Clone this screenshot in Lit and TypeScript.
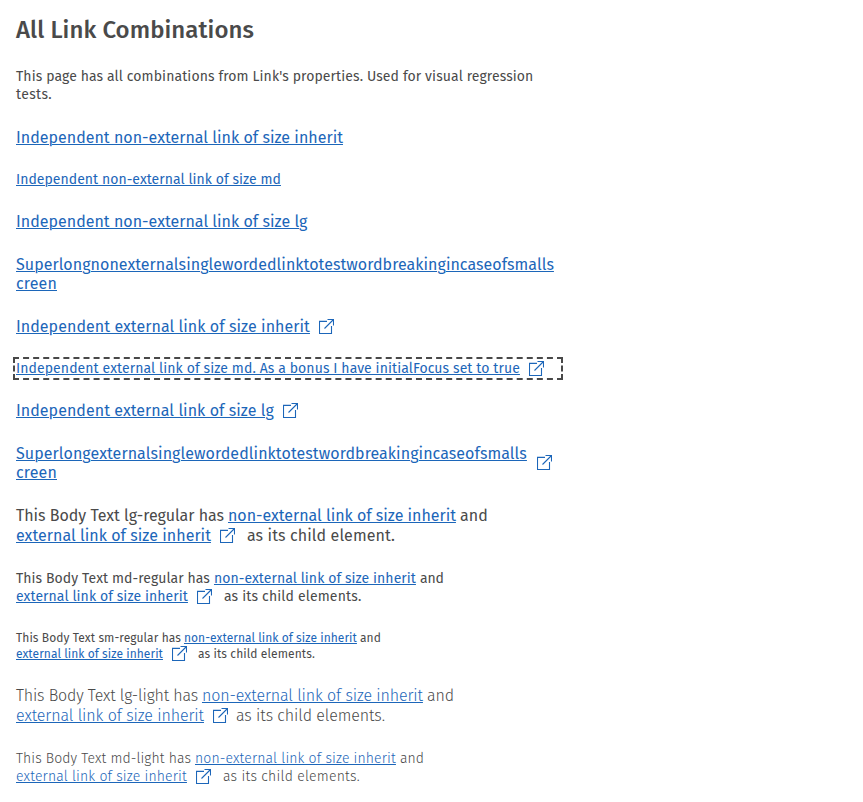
import { LitElement, html, css, svg, nothing } from "lit";
import { customElement, property } from "lit/decorators.js";
import { classMap } from "lit/directives/class-map.js";

/** A run of text whose tracking is adjusted so that it fills the given measure. */
@customElement("text-run")
class TextRun extends LitElement {
  static styles = css`
    :host { display: block; white-space: nowrap; flex: none; }
    .link {
      color: #1c66b9;
      text-decoration: underline;
      text-decoration-thickness: 1px;
      text-underline-offset: 1px;
    }
  `;
  @property() text = "";
  @property({ type: Number }) measure = 0;
  @property({ type: Boolean }) link = false;

  updated() {
    const el = this.renderRoot.querySelector<HTMLElement>(".text")!;
    el.style.letterSpacing = "0.001px";
    const natural = el.getBoundingClientRect().width;
    el.style.letterSpacing = `${(this.measure - natural) / this.text.length}px`;
  }

  render() {
    return this.link
      ? html`<a class="text link">${this.text}</a>`
      : html`<span class="text">${this.text}</span>`;
  }
}

@customElement("external-icon")
class ExternalIcon extends LitElement {
  static styles = css`
    :host { display: block; flex: none; width: 15px; height: 15px; align-self: flex-start; }
    svg { display: block; fill: none; stroke: #1c66b9; stroke-width: 1.1; }
  `;
  render() {
    return html`<svg width="15" height="15" viewBox="0 0 15 15">
      ${svg`<path d="M8 2.4H.5v12.1h12V7M8.5.5h6v6M14.5.5 5.5 9.5" />`}
    </svg>`;
  }
}

type Part = { text?: string; w?: number; gap?: number; link?: boolean; icon?: boolean };
type Block = { kind: string; lines: Part[][]; trailingIcon?: boolean };

const t = (text: string, w: number, gap = 0): Part => ({ text, w, gap });
const a = (text: string, w: number, gap = 0): Part => ({ text, w, gap, link: true });
const icon = (gap = 9): Part => ({ icon: true, gap });

const NON_EXT = "non-external link of size inherit";
const EXT = "external link of size inherit";
const AS = "as its child elements.";

const BLOCKS: Block[] = [
  { kind: "title", lines: [[t("All Link Combinations", 238)]] },
  {
    kind: "md",
    lines: [
      [t("This page has all combinations from Link's properties. Used for visual regression", 517.5)],
      [t("tests.", 36)],
    ],
  },
  { kind: "solo-lg", lines: [[a("Independent non-external link of size inherit", 327)]] },
  { kind: "solo-md", lines: [[a("Independent non-external link of size md", 265)]] },
  { kind: "solo-lg", lines: [[a("Independent non-external link of size lg", 291.5)]] },
  {
    kind: "solo-lg",
    lines: [
      [a("Superlongnonexternalsinglewordedlinktotestwordbreakingincaseofsmalls", 538)],
      [a("creen", 41)],
    ],
  },
  { kind: "solo-lg", lines: [[a("Independent external link of size inherit", 294), icon()]] },
  {
    kind: "focus",
    lines: [[a("Independent external link of size md. As a bonus I have initialFocus set to true", 504), icon()]],
  },
  { kind: "solo-lg", lines: [[a("Independent external link of size lg", 258), icon()]] },
  {
    kind: "solo-lg",
    trailingIcon: true,
    lines: [
      [a("Superlongexternalsinglewordedlinktotestwordbreakingincaseofsmalls", 511)],
      [a("creen", 41)],
    ],
  },
  {
    kind: "lg",
    lines: [
      [t("This Body Text lg-regular has", 208), a(NON_EXT, 228, 4), t("and", 28, 4)],
      [a(EXT, 195), icon(), t("as its child element.", 148, 12)],
    ],
  },
  {
    kind: "md",
    lines: [
      [t("This Body Text md-regular has", 194), a(NON_EXT, 202, 4), t("and", 24, 4)],
      [a(EXT, 172), icon(), t(AS, 137.5, 12)],
    ],
  },
  {
    kind: "sm",
    lines: [
      [t("This Body Text sm-regular has", 165), a(NON_EXT, 173, 3), t("and", 21, 3)],
      [a(EXT, 147), icon(), t(AS, 117, 11)],
    ],
  },
  {
    kind: "lg light",
    lines: [
      [t("This Body Text lg-light has", 182), a(NON_EXT, 221, 4), t("and", 27, 4)],
      [a(EXT, 188), icon(), t(AS, 149, 8)],
    ],
  },
  {
    kind: "md light",
    lines: [
      [t("This Body Text md-light has", 175), a(NON_EXT, 201, 4), t("and", 24, 4)],
      [a(EXT, 171), icon(), t(AS, 137, 12)],
    ],
  },
];

@customElement("app-root")
class AppRoot extends LitElement {
  static styles = css`
    :host {
      display: block;
      box-sizing: border-box;
      height: 802px;
      overflow: hidden;
      background: #fff;
      color: #4a4a4a;
      font-family: "Fira Sans", "Noto Sans", sans-serif;
    }
    .page {
      display: grid;
      width: 544px;
      padding: 16px 0 0 16px;
      grid-template-rows: 52px 60px 43px 41px 43px 62px 43px 41px 43px 62px 64px 60px 56px 64px 38px;
      align-items: start;
    }
    .block { --icon-top: 2px; font-size: 16px; line-height: 20px; }
    .line { display: flex; height: 1lh; }
    .title { font-size: 24px; line-height: 28px; font-weight: 500; }
    .md { --icon-top: 1px; font-size: 14px; line-height: 18px; }
    .sm { --icon-top: 0px; font-size: 12px; line-height: 16px; }
    .solo-lg { line-height: 19px; }
    .solo-md { font-size: 14px; line-height: 17px; }
    .focus {
      --icon-top: 1px;
      font-size: 14px;
      line-height: 17px;
      outline: 2px dashed #484848;
      outline-offset: 1px;
    }
    .light { font-weight: 300; }
    .with-icon { --icon-top: 11px; display: flex; }
    .with-icon .lines { width: 521px; }
    external-icon { margin-top: var(--icon-top); }
  `;

  private part(p: Part) {
    const style = `margin-left:${p.gap ?? 0}px`;
    return p.icon
      ? html`<external-icon style=${style}></external-icon>`
      : html`<text-run style=${style} .text=${p.text!} .measure=${p.w!} .link=${!!p.link}></text-run>`;
  }

  render() {
    return html`<main class="page">
      ${BLOCKS.map((b) => {
        const classes: Record<string, boolean> = { block: true, "with-icon": !!b.trailingIcon };
        b.kind.split(" ").forEach((k) => (classes[k] = true));
        return html`<div class=${classMap(classes)}>
          <div class="lines">
            ${b.lines.map((l) => html`<div class="line">${l.map((p) => this.part(p))}</div>`)}
          </div>
          ${b.trailingIcon ? html`<external-icon></external-icon>` : nothing}
        </div>`;
      })}
    </main>`;
  }
}
